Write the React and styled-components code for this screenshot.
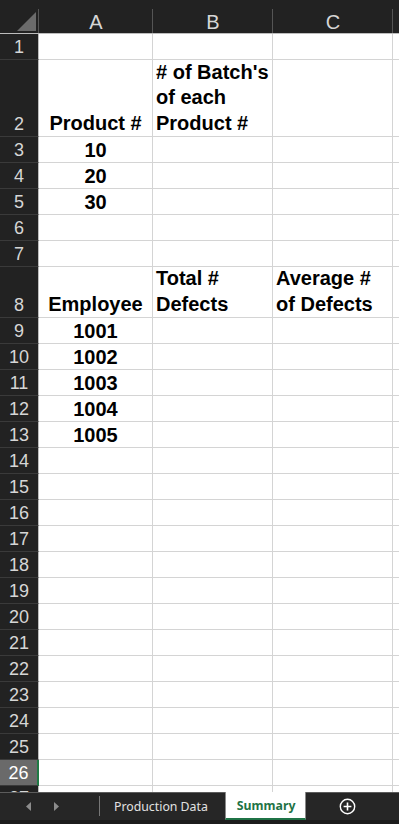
import React from 'react'
import styled, { createGlobalStyle } from 'styled-components'

const GlobalStyle = createGlobalStyle`
  html, body {
    margin: 0;
    padding: 0;
    background: #ffffff;
  }
`;

const COLS = '39px 114px 120px 120px 1fr';

const Frame = styled.div`
  width: 399px;
  height: 824px;
  display: flex;
  flex-direction: column;
  overflow: hidden;
  font-family: "Liberation Sans", Arial, sans-serif;
`;

const Sheet = styled.div`
  height: 792px;
  overflow: hidden;
  display: flex;
  flex-direction: column;
  background: #ffffff;
`;

const Row = styled.div`
  display: grid;
  grid-template-columns: ${COLS};
  height: ${({ h }) => h}px;
  flex: 0 0 auto;
`;

const HeadRow = styled(Row)`
  background: #222222;
  border-bottom: 1px solid #bdbdbd;
  box-sizing: border-box;
`;

const HeadCell = styled.div`
  position: relative;
  display: flex;
  align-items: flex-end;
  justify-content: center;
  color: #d6d6d6;
  font-size: 20px;
  line-height: 22px;
  &::after {
    content: '';
    position: absolute;
    right: 0;
    top: 9px;
    bottom: 0;
    width: 1px;
    background: ${({ last }) => (last ? 'transparent' : '#555555')};
  }
`;

const Corner = styled(HeadCell)`
  svg {
    position: absolute;
    left: 17px;
    top: 12px;
  }
`;

const RowNum = styled.div`
  box-sizing: border-box;
  background: ${({ active }) => (active ? '#6a6a6a' : '#222222')};
  color: ${({ active }) => (active ? '#ffffff' : '#d6d6d6')};
  border-bottom: 1px solid #3a3a3a;
  border-right: ${({ active }) => (active ? '2px solid #1f7a45' : '1px solid #bdbdbd')};
  display: flex;
  align-items: ${({ clipped }) => (clipped ? 'flex-start' : 'flex-end')};
  justify-content: center;
  font-size: 18px;
  line-height: 24px;
  overflow: hidden;
`;

const Cell = styled.div`
  box-sizing: border-box;
  border-right: 1px solid #d4d4d4;
  border-bottom: 1px solid #d4d4d4;
  display: flex;
  align-items: flex-end;
  justify-content: ${({ center }) => (center ? 'center' : 'flex-start')};
  text-align: ${({ center }) => (center ? 'center' : 'left')};
  padding: 0 3px;
  color: #000000;
  font-weight: 700;
  font-size: 20px;
  line-height: ${({ multi }) => (multi ? '25.5px' : '24px')};
  white-space: pre-line;
  overflow: hidden;
`;

const TabBar = styled.div`
  height: 32px;
  box-sizing: border-box;
  background: #262626;
  border-top: 1px solid #5c5c5c;
  border-bottom: 4px solid #1c1c1c;
  display: flex;
  align-items: stretch;
  font-family: "Noto Sans", "Open Sans", sans-serif;
`;

const Nav = styled.div`
  width: 99px;
  display: flex;
  align-items: center;
  padding-left: 26px;
  gap: 21px;
  box-sizing: border-box;
`;

const Divider = styled.div`
  width: 1px;
  background: #777777;
  margin: 3px 0 4px;
`;

const Tab = styled.div`
  display: flex;
  align-items: center;
  justify-content: center;
  padding: 0 ${({ active }) => (active ? '10px' : '17px')} 0 ${({ active }) => (active ? '11px' : '14px')};
  font-size: 12.3px;
  color: ${({ active }) => (active ? '#1f7346' : '#e2e2e2')};
  font-weight: ${({ active }) => (active ? 700 : 400)};
  background: ${({ active }) => (active ? '#ffffff' : 'transparent')};
  border-left: ${({ active }) => (active ? '1px solid #8a8a8a' : 'none')};
  border-right: ${({ active }) => (active ? '1px solid #8a8a8a' : 'none')};
  border-bottom: ${({ active }) => (active ? '2px solid #1f7346' : 'none')};
  margin-top: ${({ active }) => (active ? '-1px' : '0')};
  white-space: nowrap;
`;

const AddButton = styled.div`
  display: flex;
  align-items: center;
  margin-left: 33px;
`;

const rows = [
  { n: 1, h: 26, cells: ['', '', ''] },
  { n: 2, h: 77, multi: true, cells: ['Product #', "# of Batch's\nof each\nProduct #", ''] },
  { n: 3, h: 26, cells: ['10', '', ''] },
  { n: 4, h: 26, cells: ['20', '', ''] },
  { n: 5, h: 26, cells: ['30', '', ''] },
  { n: 6, h: 26, cells: ['', '', ''] },
  { n: 7, h: 26, cells: ['', '', ''] },
  { n: 8, h: 51, multi: true, cells: ['Employee', 'Total #\nDefects', 'Average #\nof Defects'] },
  { n: 9, h: 26, cells: ['1001', '', ''] },
  { n: 10, h: 26, cells: ['1002', '', ''] },
  { n: 11, h: 26, cells: ['1003', '', ''] },
  { n: 12, h: 26, cells: ['1004', '', ''] },
  { n: 13, h: 26, cells: ['1005', '', ''] },
];
for (let i = 14; i <= 27; i++) rows.push({ n: i, h: 26, cells: ['', '', ''] });

const App = () => {
  return (
    <Frame>
      <GlobalStyle />
      <Sheet>
        <HeadRow h={34}>
          <Corner>
            <svg width="19" height="19" viewBox="0 0 19 19">
              <polygon points="19,0 19,19 0,19" fill="#6b6b6b" />
            </svg>
          </Corner>
          <HeadCell>A</HeadCell>
          <HeadCell>B</HeadCell>
          <HeadCell>C</HeadCell>
          <HeadCell last />
        </HeadRow>
        {rows.map((r) => (
          <Row key={r.n} h={r.h}>
            <RowNum active={r.n === 26} clipped={r.n === 27}>{r.n}</RowNum>
            <Cell center multi={r.multi}>{r.cells[0]}</Cell>
            <Cell multi={r.multi}>{r.cells[1]}</Cell>
            <Cell multi={r.multi}>{r.cells[2]}</Cell>
            <Cell />
          </Row>
        ))}
      </Sheet>
      <TabBar>
        <Nav>
          <svg width="6" height="9" viewBox="0 0 6 9">
            <polygon points="5,0 5,9 0,4.5" fill="#8c8c8c" />
          </svg>
          <svg width="6" height="9" viewBox="0 0 6 9">
            <polygon points="1,0 1,9 6,4.5" fill="#8c8c8c" />
          </svg>
        </Nav>
        <Divider />
        <Tab>Production Data</Tab>
        <Tab active>Summary</Tab>
        <AddButton>
          <svg width="17" height="17" viewBox="0 0 17 17">
            <circle cx="8.5" cy="8.5" r="7.2" fill="none" stroke="#ffffff" strokeWidth="1.4" />
            <path d="M8.5 4.6 V12.4 M4.6 8.5 H12.4" stroke="#ffffff" strokeWidth="1.6" />
          </svg>
        </AddButton>
      </TabBar>
    </Frame>
  )
}

export default App;
